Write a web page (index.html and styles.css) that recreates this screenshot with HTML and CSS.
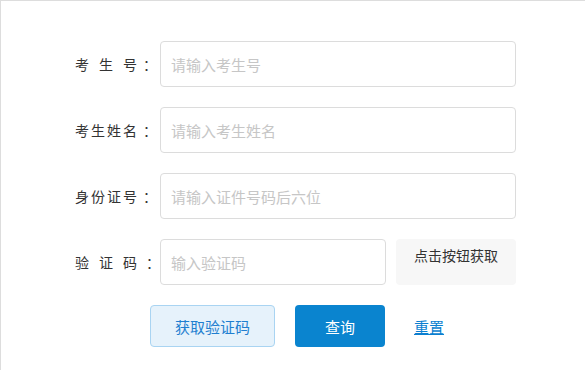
FILE: index.html
```html
<!DOCTYPE html>
<html lang="zh-CN">
<head>
<meta charset="utf-8">
<title>成绩查询</title>
<link rel="stylesheet" href="styles.css">
</head>
<body>
<div class="panel">
  <form class="form">
    <div class="row">
      <label class="label"><span class="chars"><span>考</span><span>生</span><span>号</span></span><span class="colon">：</span></label>
      <input class="field" type="text" placeholder="请输入考生号">
    </div>
    <div class="row">
      <label class="label"><span class="chars"><span>考</span><span>生</span><span>姓</span><span>名</span></span><span class="colon">：</span></label>
      <input class="field" type="text" placeholder="请输入考生姓名">
    </div>
    <div class="row">
      <label class="label"><span class="chars"><span>身</span><span>份</span><span>证</span><span>号</span></span><span class="colon">：</span></label>
      <input class="field" type="text" placeholder="请输入证件号码后六位">
    </div>
    <div class="row">
      <label class="label"><span class="chars wide"><span>验</span><span>证</span><span>码</span></span><span class="colon far">：</span></label>
      <input class="field short" type="text" placeholder="输入验证码">
      <div class="code">点击按钮获取</div>
    </div>
    <div class="actions">
      <button class="btn btn-get" type="button">获取验证码</button>
      <button class="btn btn-query" type="button">查询</button>
      <a class="reset" href="#">重置</a>
    </div>
  </form>
</div>
</body>
</html>
```
FILE: styles.css
```css
html, body {
  margin: 0;
}
body {
  font-family: "Noto Sans CJK SC", "Noto Sans", sans-serif;
  font-size: 14px;
  color: #333;
  background: #fff;
}
.panel {
  min-height: 100vh;
  box-sizing: border-box;
  border-top: 1px solid #dddddd;
  border-left: 1px solid #dddddd;
  padding-top: 40px;
}
.form {
  display: flex;
  flex-direction: column;
  gap: 20px;
  padding-left: 74px;
}
.row {
  display: flex;
  align-items: center;
  height: 46px;
}
.label {
  width: 85px;
  display: flex;
  align-items: center;
  color: #333;
}
.chars {
  display: flex;
  justify-content: space-between;
  width: 62px;
}
.chars.wide {
  width: 64px;
}
.colon {
  margin-left: 6px;
}
.colon.far {
  margin-left: 9px;
}
.field {
  box-sizing: border-box;
  width: 356px;
  height: 46px;
  border: 1px solid #dcdcdc;
  border-radius: 4px;
  padding: 0 10px;
  font: inherit;
  font-size: 15px;
  color: #333;
  outline: none;
  background: #fff;
}
.field::placeholder {
  color: #c6c6c6;
}
.field.short {
  width: 226px;
}
.code {
  margin-left: 10px;
  width: 120px;
  height: 46px;
  align-self: stretch;
  background: #f7f7f7;
  border-radius: 4px;
  text-align: center;
  line-height: 32px;
  color: #333;
}
.actions {
  display: flex;
  align-items: center;
  margin-left: 75px;
}
.btn {
  box-sizing: border-box;
  height: 42px;
  border-radius: 4px;
  font: inherit;
  font-size: 15px;
  padding: 0;
  cursor: pointer;
}
.btn-get {
  width: 125px;
  background: #e6f2fb;
  border: 1px solid #a9d4f2;
  color: #1f7fd0;
}
.btn-query {
  width: 90px;
  margin-left: 20px;
  background: #0a84cf;
  border: none;
  color: #fff;
}
.reset {
  margin-left: 29px;
  font-size: 15px;
  color: #0b7fd0;
  text-decoration: underline;
}
```
